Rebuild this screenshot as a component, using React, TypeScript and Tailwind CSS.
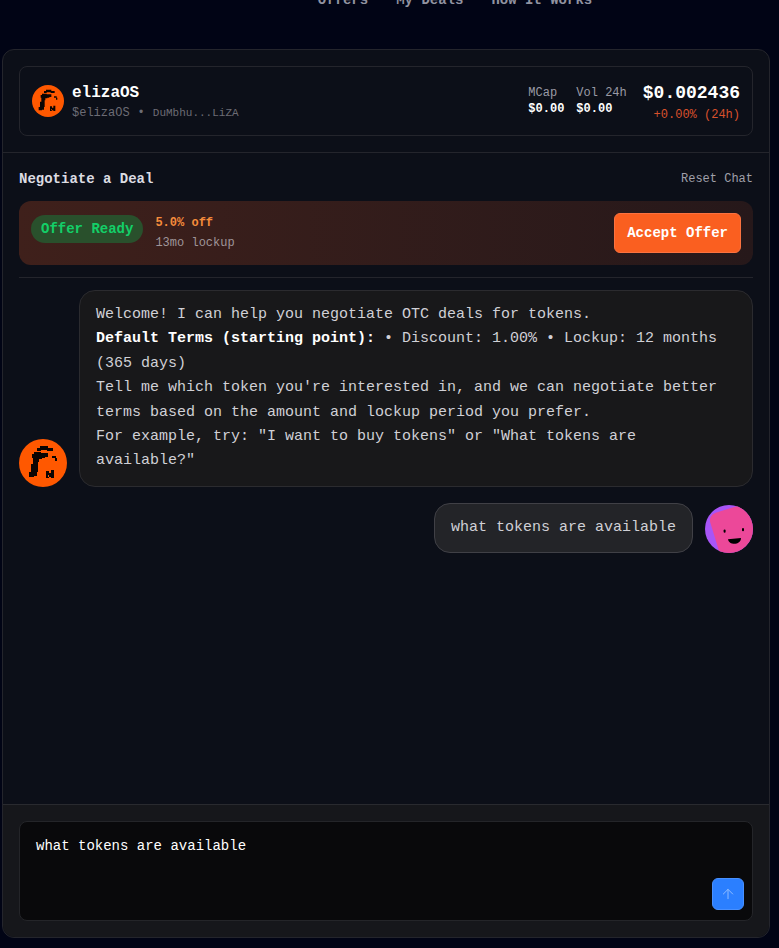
import { useState } from "react";
import { ArrowUp } from "lucide-react";

const NAV_LINKS = ["Offers", "My Deals", "How It Works"];

const TOKEN_STATS = [
  { label: "MCap", value: "$0.00" },
  { label: "Vol 24h", value: "$0.00" },
];

function ElizaAvatar({ className }: { className: string }) {
  return (
    <svg viewBox="0 0 48 48" className={className} role="img" aria-label="elizaOS">
      <circle cx="24" cy="24" r="24" fill="#ff5800" />
      <g fill="#0b0503">
        <path d="M21 7h8v2h5v3h-6v-1h-6v1h-4v-3h3z" />
        <path d="M15 13h7v1h7v4h-3v1h-3v1h-3v3h-1v10h-1v4h-3v1h-5v-5h2v-8h2v-6h-1v-4h2z" />
        <path d="M33 17h4v2h1v3h-2v-3h-3z" />
        <path d="M27 32h3v2h2v-3h3v8h-3v-1h-2v1h-3z" />
        <path d="M29 36h1v2h-1z" fill="#ff5800" />
      </g>
    </svg>
  );
}

function UserAvatar() {
  return (
    <svg viewBox="0 0 48 48" className="size-12 shrink-0" role="img" aria-label="You">
      <clipPath id="user-avatar-clip">
        <circle cx="24" cy="24" r="24" />
      </clipPath>
      <g clipPath="url(#user-avatar-clip)">
        <rect width="48" height="48" fill="#a855f7" />
        <rect x="3" y="10" width="56" height="56" rx="8" fill="#ec4899" transform="rotate(-17 3 10)" />
        <rect x="18.6" y="24.6" width="2" height="3.2" rx="1" fill="#000" />
        <rect x="37" y="23" width="2" height="3.2" rx="1" fill="#000" />
        <path d="M23 34.2 36 33c.2 7-12 8-13 1.2z" fill="#000" />
      </g>
    </svg>
  );
}

function TokenHeader() {
  return (
    <div className="border-b border-[#24252c] p-4">
      <div className="flex items-center justify-between rounded-lg border border-[#24252c] p-3">
        <div className="flex items-center gap-2">
          <ElizaAvatar className="size-8 shrink-0" />
          <div>
            <h1 className="text-base font-bold text-white">elizaOS</h1>
            <p className="flex items-center gap-2 text-xs text-[#6c6c75]">
              <span>$elizaOS</span>
              <span>•</span>
              <span className="text-[11px]">DuMbhu...LiZA</span>
            </p>
          </div>
        </div>

        <div className="flex items-center gap-4">
          <dl className="flex gap-3 text-xs">
            {TOKEN_STATS.map((stat) => (
              <div key={stat.label}>
                <dt className="text-[#9a9aa5]">{stat.label}</dt>
                <dd className="font-bold text-white">{stat.value}</dd>
              </div>
            ))}
          </dl>
          <div className="text-right">
            <div className="text-lg font-bold text-white">$0.002436</div>
            <div className="text-xs text-[#d9512c]">+0.00% (24h)</div>
          </div>
        </div>
      </div>
    </div>
  );
}

function OfferBar() {
  return (
    <div className="flex items-center justify-between rounded-xl bg-linear-to-r from-[#3f201b] to-[#26181a] p-3">
      <div className="flex items-center gap-3">
        <div className="pb-2">
          <span className="flex rounded-full bg-[#29502c] px-[10px] py-1 text-sm font-bold text-[#13cf68]">
            Offer Ready
          </span>
        </div>
        <div className="text-xs leading-5">
          <div className="font-bold text-[#f58c3c]">5.0% off</div>
          <div className="text-[#9f9599]">13mo lockup</div>
        </div>
      </div>
      <button
        type="button"
        className="h-10 rounded-md border border-[#fb7240] bg-[#fa5f20] px-3 text-sm font-bold text-white"
      >
        Accept Offer
      </button>
    </div>
  );
}

function Messages() {
  return (
    <div className="flex flex-1 flex-col gap-4 px-4 py-3 text-[15px] leading-relaxed text-[#d0d0d6]">
      {/* Agent */}
      <div className="flex items-end gap-3">
        <ElizaAvatar className="size-12 shrink-0" />
        <div className="flex-1 rounded-2xl border border-[#2b2b2f] bg-[#18181a] px-4 py-3">
          <p>Welcome! I can help you negotiate OTC deals for tokens.</p>
          <p>
            <strong className="font-bold text-white">Default Terms (starting point):</strong> • Discount: 1.00% •
            Lockup: 12 months (365 days)
          </p>
          <p>
            Tell me which token you're interested in, and we can negotiate better terms based on the amount and
            lockup period you prefer.
          </p>
          <p>For example, try: "I want to buy tokens" or "What tokens are available?"</p>
        </div>
      </div>

      {/* User */}
      <div className="flex items-end justify-end gap-3">
        <div className="rounded-2xl border border-[#404046] bg-[#232428] px-4 py-3">
          <p>what tokens are available</p>
        </div>
        <UserAvatar />
      </div>
    </div>
  );
}

function Composer() {
  const [text, setText] = useState("what tokens are available");

  return (
    <form
      className="rounded-b-xl border-t border-[#292a2f] bg-[#16171b] p-4"
      onSubmit={(e) => e.preventDefault()}
    >
      <div className="relative">
        <textarea
          aria-label="Message"
          value={text}
          onChange={(e) => setText(e.target.value)}
          className="block h-[100px] w-full resize-none rounded-lg border border-[#242529] bg-[#09090b] px-4 py-3 text-sm leading-6 text-white outline-none"
        />
        <button
          type="submit"
          aria-label="Send"
          className="absolute right-[9px] bottom-[11px] flex size-8 items-center justify-center rounded-md border border-[#4890ff] bg-[#2b7fff] text-[#8fbcff]"
        >
          <ArrowUp size={16} strokeWidth={1.5} />
        </button>
      </div>
    </form>
  );
}

export default function App() {
  return (
    <div className="flex min-h-screen flex-col overflow-hidden bg-[#010415] pr-[9px] pb-[10px] pl-[2px] font-['Liberation_Mono',monospace]">
      <nav className="-mt-[10px] flex h-[59px] items-start justify-center gap-7 pl-[138px] text-sm font-bold text-[#9193a0]">
        {NAV_LINKS.map((link) => (
          <a key={link} href="#">
            {link}
          </a>
        ))}
      </nav>

      <main className="flex flex-1 flex-col rounded-xl border border-[#24252c] bg-[#0c0f18]">
        <TokenHeader />

        <div className="px-4 pt-4">
          <div className="flex flex-col gap-3 border-b border-[#24252c] pb-3">
            <div className="flex items-center justify-between">
              <h2 className="text-sm font-bold text-[#dcdce2]">Negotiate a Deal</h2>
              <button type="button" className="text-xs text-[#a0a0aa]">
                Reset Chat
              </button>
            </div>
            <OfferBar />
          </div>
        </div>

        <Messages />
        <Composer />
      </main>
    </div>
  );
}
